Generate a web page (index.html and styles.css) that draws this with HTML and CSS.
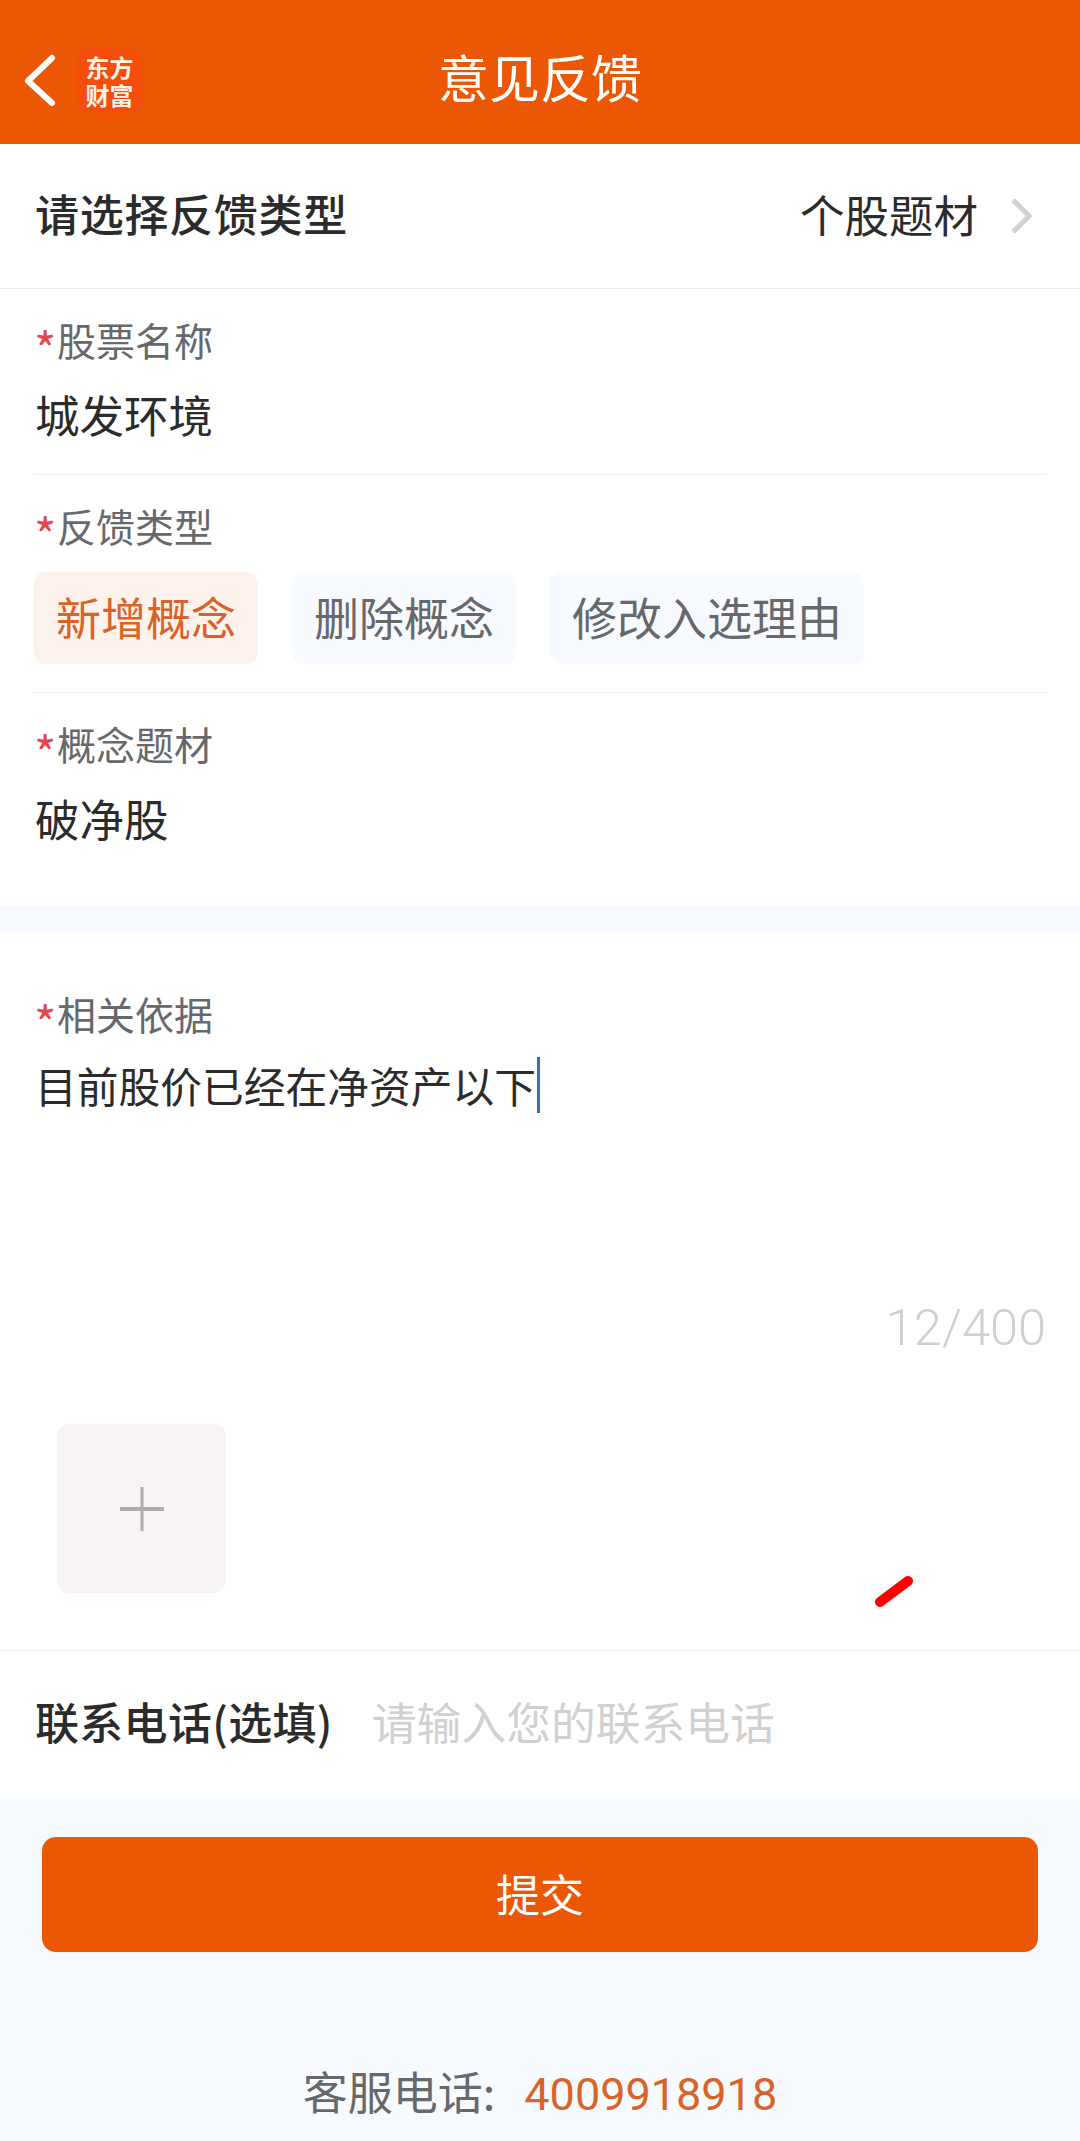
FILE: index.html
```html
<!DOCTYPE html>
<html lang="zh-CN">
<head>
<meta charset="utf-8">
<title>意见反馈</title>
<link rel="stylesheet" href="styles.css">
</head>
<body>
<header class="topbar">
  <div class="topbar-left">
    <svg class="back" width="36" height="56" viewBox="0 0 36 56"><path d="M30 5 L6 28 L30 50" fill="none" stroke="#fff" stroke-width="6" stroke-linecap="round" stroke-linejoin="round"/></svg>
    <div class="logo"><span>东方财富</span></div>
  </div>
  <h1 class="title">意见反馈</h1>
</header>
<main>
  <div class="type-row">
    <span class="strong lift">请选择反馈类型</span>
    <span class="type-value">
      <span class="lift">个股题材</span>
      <svg class="chevron" width="22" height="36" viewBox="0 0 22 36"><path d="M2 2 L18 18 L2 34" fill="none" stroke="#d2d2d2" stroke-width="5"/></svg>
    </span>
  </div>
  <section class="form-top">
    <div class="field field-name">
      <div class="label"><i>*</i>股票名称</div>
      <div class="value">城发环境</div>
    </div>
    <div class="field field-kind">
      <div class="label"><i>*</i>反馈类型</div>
      <div class="chips">
        <span class="chip active">新增概念</span>
        <span class="chip">删除概念</span>
        <span class="chip">修改入选理由</span>
      </div>
    </div>
    <div class="field field-topic">
      <div class="label"><i>*</i>概念题材</div>
      <div class="value">破净股</div>
    </div>
  </section>
  <div class="band"></div>
  <section class="basis">
    <div class="label"><i>*</i>相关依据</div>
    <div class="value note">目前股价已经在净资产以下<span class="caret"></span></div>
    <div class="count">12/400</div>
    <div class="upload-row">
      <div class="upload">
        <svg width="46" height="46" viewBox="0 0 46 46"><path d="M23 1 V45" stroke="#adadb0" stroke-width="3"/><path d="M1 23 H45" stroke="#adadb0" stroke-width="4"/></svg>
      </div>
      <svg class="scribble" width="44" height="38" viewBox="0 0 44 38"><path d="M7 29 L35 8" stroke="#f00" stroke-width="10" stroke-linecap="round"/></svg>
    </div>
  </section>
  <div class="phone-row">
    <span class="strong lift">联系电话(选填)</span>
    <span class="placeholder lift">请输入您的联系电话</span>
  </div>
</main>
<footer class="bottom">
  <button class="submit">提交</button>
  <div class="service">客服电话:<span>4009918918</span></div>
</footer>
</body>
</html>
```
FILE: styles.css
```css
* { box-sizing: border-box; }
html, body { margin: 0; padding: 0; }
body {
  width: 1080px;
  height: 2141px;
  overflow: hidden;
  background: #fff;
  font-family: "Noto Sans CJK SC", "Noto Sans", sans-serif;
  color: #2b2b2b;
}
.topbar {
  height: 144px;
  background: #ec5703;
  display: flex;
  align-items: center;
  justify-content: center;
  position: relative;
}
.topbar-left {
  position: absolute;
  left: 22px;
  top: 48px;
  display: flex;
  align-items: center;
  gap: 19px;
}
.logo {
  width: 65px;
  height: 65px;
  border-radius: 13px;
  background: #f54d0c;
  display: flex;
  align-items: center;
  justify-content: center;
  color: #fff2e6;
  font-size: 24px;
  line-height: 28px;
  font-weight: 700;
}
.logo span { display: block; width: 50px; text-align: center; }
.title {
  margin: 8px 0 0 0;
  font-size: 51px;
  font-weight: 400;
  color: #fff;
  line-height: 70px;
}
.lift { padding-bottom: 6px; }
.type-row {
  height: 145px;
  padding: 0 47px 0 35px;
  display: flex;
  align-items: center;
  justify-content: space-between;
  border-bottom: 1px solid #ececec;
}
.strong { font-size: 44px; font-weight: 500; letter-spacing: 0.7px; color: #2b2b2b; }
.type-value {
  font-size: 44.5px;
  display: flex;
  align-items: center;
  gap: 33px;
  color: #2b2b2b;
}
.form-top { padding: 0 34px 0 34px; height: 617px; }
.field { border-bottom: 1px solid #efefef; }
.field-name { height: 186px; padding-top: 22px; }
.field-kind { height: 218px; padding-top: 22px; }
.field-topic { border-bottom: 0; padding-top: 22px; }
.label {
  height: 56px;
  font-size: 39px;
  line-height: 56px;
  color: #66686b;
  display: flex;
  align-items: center;
}
.label i {
  display: block;
  height: 56px;
  font-style: normal;
  color: #e2474c;
  width: 23px;
  font-size: 48px;
  line-height: 56px;
  padding-top: 8px;
  margin-right: 0;
}
.value {
  font-size: 44.5px;
  line-height: 60px;
  color: #2b2b2b;
  margin-top: 17px;
  display: flex;
  align-items: center;
  padding-left: 1px;
}
.chips {
  display: flex;
  gap: 34px;
  margin-top: 19px;
}
.chip {
  height: 92px;
  padding: 0 22px 4px;
  border-radius: 12px;
  background: #f7fafe;
  color: #66686b;
  font-size: 45px;
  display: flex;
  align-items: center;
}
.chip.active { background: #fef2ec; color: #d8642a; }
.band { height: 27px; background: #f7fafe; }
.basis { padding: 0 34px; height: 717px; position: relative; }
.basis .label { padding-top: 52px; box-sizing: content-box; }
.basis .value { margin-top: 14px; }
.basis .value.note { font-size: 41.75px; }
.caret {
  display: block;
  width: 3px;
  height: 56px;
  background: #3e6ea8;
  margin-left: 1px;
}
.count {
  margin-top: 183px;
  text-align: right;
  font-size: 50.5px;
  line-height: 60px;
  color: #cfcfcf;
  font-family: Roboto, sans-serif;
  font-weight: 300;
}
.upload-row { position: relative; margin: 66px 0 0 23px; }
.upload {
  width: 169px;
  height: 169px;
  border-radius: 12px;
  background: #f7f3f6;
  display: flex;
  align-items: center;
  justify-content: center;
}
.scribble { position: absolute; left: 816px; top: 149px; }
.phone-row {
  height: 146px;
  border-top: 1px solid #ececec;
  padding: 0 35px;
  display: flex;
  align-items: center;
  gap: 39px;
}
.phone-row .strong { letter-spacing: 0.3px; }
.placeholder { font-size: 44.8px; color: #d0d0d0; }
.bottom {
  height: 345px;
  background: #f7fafe;
  padding: 41px 42px 0;
  display: flex;
  flex-direction: column;
  align-items: center;
}
.submit {
  width: 996px;
  height: 115px;
  border: 0;
  border-radius: 14px;
  background: #ec5703;
  color: #fff;
  font: 400 44px "Noto Sans CJK SC", sans-serif;
  padding: 0 0 4px;
}
.service {
  margin-top: 109px;
  font-size: 45px;
  line-height: 60px;
  color: #66686b;
}
.service span {
  color: #d8642a;
  font-family: Roboto, sans-serif;
  margin-left: 29px;
}
```
